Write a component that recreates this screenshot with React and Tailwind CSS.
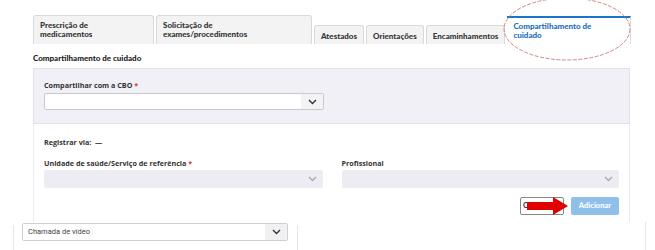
import React from "react";

function Chevron({ className = "" }) {
  return (
    <svg width="9" height="6" viewBox="0 0 9 6" className={className}>
      <path d="M1 1 L4.5 4.5 L8 1" fill="none" stroke="currentColor" strokeWidth="1.4" />
    </svg>
  );
}

function Tab({ children, tall }) {
  return (
    <div
      className={`flex items-start border border-b-0 border-[#d9d9d9] bg-[#f3f3f3] rounded-t-[3px] px-[6px] text-[8px] leading-[9px] font-black text-[#333] ${
        tall ? "h-[29px] pt-[5px]" : "h-[19px] pt-[6px]"
      }`}
    >
      {children}
    </div>
  );
}

const label = "text-[7.2px] leading-[9px] font-bold text-[#333] font-['Open_Sans',sans-serif]";

export default function App() {
  return (
    <div className="relative w-[655px] h-[250px] overflow-hidden bg-white font-['Lato','Liberation_Sans',sans-serif]">
      {/* Tabs */}
      <div className="flex items-end gap-[2px] pl-[33px] pt-[15px]">
        <div className="w-[121px]">
          <Tab tall>
            Prescrição de
            <br />
            medicamentos
          </Tab>
        </div>
        <div className="w-[156px]">
          <Tab tall>
            Solicitação de
            <br />
            exames/procedimentos
          </Tab>
        </div>
        <Tab>Atestados</Tab>
        <Tab>Orientações</Tab>
        <Tab>Encaminhamentos</Tab>
        <div className="w-[124px] h-[28px] border-t-[2px] border-[#1c74c9] border-r border-r-[#ddd] bg-white px-[6px] pt-[4px] text-[8px] leading-[9px] font-black text-[#1c6fc2]">
          Compartilhamento de
          <br />
          cuidado
        </div>
      </div>

      {/* Heading */}
      <div className="pl-[33px] pt-[10px] text-[8px] leading-[9px] font-black text-[#222]">
        Compartilhamento de cuidado
      </div>

      {/* Panel */}
      <div className="ml-[33px] mt-[5px] w-[597px]">
        <div className="border border-[#e2e1ea] bg-[#f1f0f6] px-[10px] pt-[12px] pb-[13px]">
          <div className={label}>
            Compartilhar com a CBO <span className="text-[#d33]">*</span>
          </div>
          <div className="mt-[3px] flex h-[17px] w-[280px] border border-[#c8c8cf] bg-white rounded-[2px]">
            <div className="flex-1" />
            <div className="flex w-[22px] items-center justify-center bg-[#f3f3f6] text-[#333]">
              <Chevron />
            </div>
          </div>
        </div>
        <div className="border-l border-r border-[#ececf0] h-[100px] px-[10px] pt-[14px]">
          <div className={label}>Registrar via: &nbsp;—</div>
          <div className="mt-[12px] flex gap-[19px]">
            <div className="w-[279px]">
              <div className={label}>
                Unidade de saúde/Serviço de referência <span className="text-[#d33]">*</span>
              </div>
              <div className="mt-[2px] flex h-[18px] items-center justify-end bg-[#ececf2] pr-[6px] text-[#aaa] rounded-[2px]">
                <Chevron />
              </div>
            </div>
            <div className="w-[278px]">
              <div className={label}>Profissional</div>
              <div className="mt-[2px] flex h-[18px] items-center justify-end bg-[#ececf2] pr-[6px] text-[#aaa] rounded-[2px]">
                <Chevron />
              </div>
            </div>
          </div>
          <div className="mt-[9px] flex justify-end gap-[7px]">
            <div className="flex h-[18px] w-[44px] items-center border border-[#888] bg-white rounded-[2px] pl-[2px] text-[7.5px] font-bold text-[#333]">
              C
            </div>
            <div className="flex h-[18px] w-[48px] items-center justify-center bg-[#8ec0ea] rounded-[2px] text-[7.5px] font-black text-white">
              Adicionar
            </div>
          </div>
        </div>
      </div>

      {/* Pasted fragment at the bottom */}
      <div className="absolute left-[13px] top-[222px] flex h-[28px] w-[633px] bg-white">
        <div className="relative w-[285px] h-full">
          <div className="absolute left-0 top-[3px] bottom-0 border-l border-[#e6e6e6]" />
          <div className="absolute right-0 top-[3px] bottom-0 border-r border-[#e6e6e6]" />
          <div className="ml-[9px] mt-[1px] flex h-[18px] w-[266px] border border-[#cfcfd4] rounded-[2px] bg-white">
            <div className="flex flex-1 items-center pl-[5px] text-[7.5px] text-[#444] font-['Roboto',sans-serif]">
              Chamada de vídeo
            </div>
            <div className="flex w-[22px] items-center justify-center bg-[#f1f1f4] text-[#333]">
              <Chevron />
            </div>
          </div>
        </div>
        <div className="flex-1 border-r border-[#e6e6e6]" />
      </div>

      {/* Annotations */}
      <svg className="absolute left-0 top-0" width="655" height="250">
        <ellipse
          cx="567"
          cy="29"
          rx="63"
          ry="31"
          fill="none"
          stroke="#c66a6a"
          strokeWidth="0.8"
          strokeDasharray="4 1.5"
        />
        <path d="M527 202 H553 V197 L568 206 L553 215 V210 H527 Z" fill="#e00000" />
      </svg>
    </div>
  );
}
